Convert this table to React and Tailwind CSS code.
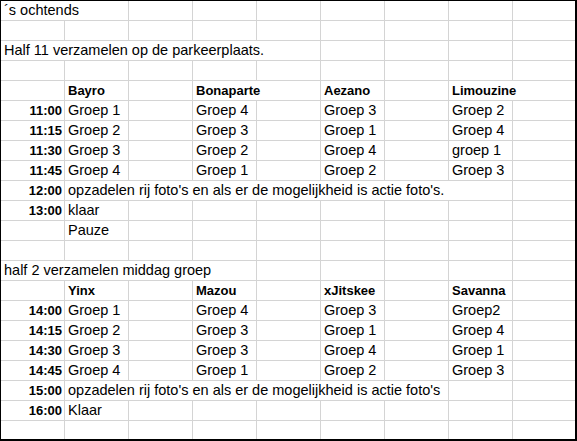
const slots1 = [
  ["11:00", "Groep 1", "Groep 4", "Groep 3", "Groep 2"],
  ["11:15", "Groep 2", "Groep 3", "Groep 1", "Groep 4"],
  ["11:30", "Groep 3", "Groep 2", "Groep 4", "groep 1"],
  ["11:45", "Groep 4", "Groep 1", "Groep 2", "Groep 3"],
];

const slots2 = [
  ["14:00", "Groep 1", "Groep 4", "Groep 3", "Groep2"],
  ["14:15", "Groep 2", "Groep 3", "Groep 1", "Groep 4"],
  ["14:30", "Groep 3", "Groep 3", "Groep 4", "Groep 1"],
  ["14:45", "Groep 4", "Groep 1", "Groep 2", "Groep 3"],
];

// each row: cells by column index, plus which column borders are hidden by overflowing text
function slotRow([time, a, b, c, d]) {
  return {
    cells: { 0: { t: time, bold: true, right: true }, 1: { t: a }, 3: { t: b }, 5: { t: c }, 7: { t: d } },
    hide: [],
  };
}

function headerRow(names, hide) {
  return {
    cells: { 1: { t: names[0], bold: true }, 3: { t: names[1], bold: true }, 5: { t: names[2], bold: true }, 7: { t: names[3], bold: true } },
    hide,
  };
}

const empty = { cells: {}, hide: [] };

const rows = [
  { cells: { 0: { t: "´s ochtends" } }, hide: [0] },
  empty,
  { cells: { 0: { t: "Half 11 verzamelen op de parkeerplaats." } }, hide: [0, 1, 2, 3] },
  empty,
  headerRow(["Bayro", "Bonaparte", "Aezano", "Limouzine"], [3, 7]),
  ...slots1.map(slotRow),
  {
    cells: { 0: { t: "12:00", bold: true, right: true }, 1: { t: "opzadelen rij foto's en als er de mogelijkheid is actie foto's." } },
    hide: [1, 2, 3, 4, 5, 6],
  },
  { cells: { 0: { t: "13:00", bold: true, right: true }, 1: { t: "klaar" } }, hide: [] },
  { cells: { 1: { t: "Pauze" } }, hide: [] },
  empty,
  { cells: { 0: { t: "half 2 verzamelen middag groep" } }, hide: [0, 1, 2] },
  headerRow(["Yinx", "Mazou", "xJitskee", "Savanna"], []),
  ...slots2.map(slotRow),
  {
    cells: { 0: { t: "15:00", bold: true, right: true }, 1: { t: "opzadelen rij foto's en als er de mogelijkheid is actie foto's" } },
    hide: [1, 2, 3, 4, 5],
  },
  { cells: { 0: { t: "16:00", bold: true, right: true }, 1: { t: "Klaar" } }, hide: [] },
  empty,
];

const cols = [0, 1, 2, 3, 4, 5, 6, 7, 8];

export default function App() {
  return (
    <div className="w-[577px] h-[441px] overflow-hidden bg-white border-l border-t border-r-2 border-b-2 border-black text-[14.5px] text-black font-['Liberation_Sans',Arial,sans-serif]">
      {rows.map((row, r) => (
        <div key={r} className="flex h-[20px] border-b border-[#d4d4d4]">
          {cols.map((c) => {
            const cell = row.cells[c];
            const last = c === 8;
            const hidden = row.hide.includes(c);
            return (
              <div
                key={c}
                className={[
                  "h-[19px] flex items-end pb-[1px] whitespace-nowrap leading-[17px]",
                  last ? "w-[62px]" : "w-[64px] border-r",
                  hidden ? "border-transparent" : "border-[#d4d4d4]",
                  cell?.right ? "justify-end pr-[2px]" : "pl-[3px]",
                  cell?.bold ? "font-bold text-[13px]" : "",
                ].join(" ")}
              >
                {cell ? <span>{cell.t}</span> : null}
              </div>
            );
          })}
        </div>
      ))}
    </div>
  );
}
